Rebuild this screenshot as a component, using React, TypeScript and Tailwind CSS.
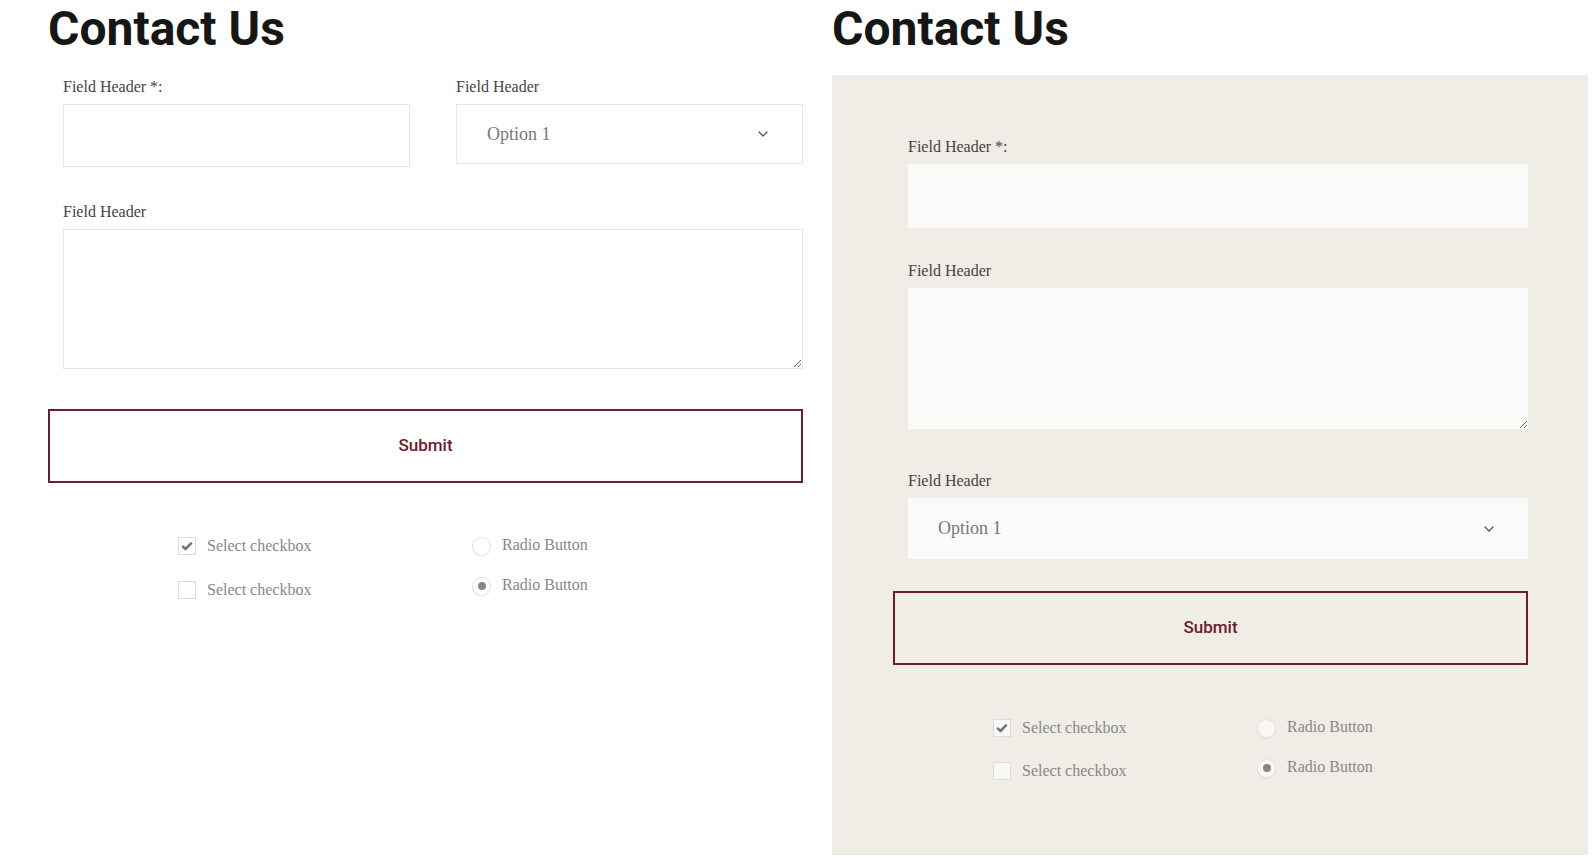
import React from 'react';

const serif = "font-['Liberation_Serif','Times_New_Roman',serif]";
const roboto = "font-['Roboto','Liberation_Sans',sans-serif]";

const Chevron = () => (
  <svg width="10" height="6" viewBox="0 0 10 6" fill="none">
    <path d="M1 1l4 4 4-4" stroke="#555" strokeWidth="1.3" strokeLinecap="round" strokeLinejoin="round" />
  </svg>
);

const Label = ({ text }: { text: string }) => (
  <div className={`${serif} h-[20px] leading-[20px] text-[16px] text-[#444] mb-[7px]`}>{text}</div>
);

const SelectBox = ({ filled, h }: { filled?: boolean; h: string }) => (
  <div
    className={`${h} flex items-center justify-between pl-[30px] pr-[34px] ${
      filled ? 'bg-[#fafaf8]' : 'bg-white border border-[#e6e6e6]'
    }`}
  >
    <span className={`${serif} text-[18px] text-[#777]`}>Option 1</span>
    <Chevron />
  </div>
);

const Checkbox = ({ checked, filled }: { checked?: boolean; filled?: boolean }) => (
  <div className="flex items-center h-[18px]">
    <div
      className={`w-[18px] h-[18px] border border-[#dcdcdc] flex items-center justify-center ${
        filled ? 'bg-[#f9f8f5]' : 'bg-white'
      }`}
    >
      {checked && (
        <svg width="16" height="16" viewBox="0 0 16 16" fill="none">
          <path d="M4 8.6l2.5 2.4L12 5.4" stroke="#777" strokeWidth="2.7" strokeLinecap="round" strokeLinejoin="round" />
        </svg>
      )}
    </div>
    <span className={`${serif} ml-[11px] text-[16px] leading-[18px] text-[#888]`}>Select checkbox</span>
  </div>
);

const Radio = ({ checked, filled }: { checked?: boolean; filled?: boolean }) => (
  <div className="flex items-center h-[18px]">
    <div
      className={`w-[19px] h-[19px] rounded-full border border-[#e2e2e2] shadow-[0_1px_1px_rgba(0,0,0,0.04)] flex items-center justify-center ${
        filled ? 'bg-[#f9f8f5]' : 'bg-white'
      }`}
    >
      {checked && <div className="w-[8px] h-[8px] rounded-full bg-[#858585]" />}
    </div>
    <span className={`${serif} ml-[11px] -mt-[2px] text-[16px] leading-[18px] text-[#888]`}>Radio Button</span>
  </div>
);

const SubmitButton = () => (
  <button
    type="button"
    className={`${roboto} w-full h-[74px] border-2 border-[#6b1f2b] text-[17px] font-medium text-[#6e1c28] bg-transparent`}
  >
    Submit
  </button>
);

const Heading = () => (
  <h1 className={`${roboto} text-[48px] leading-none h-[48px] font-bold text-[#161616]`}>
    Contact Us
  </h1>
);

export default function App() {
  return (
    <div className="w-[1592px] h-[858px] bg-white flex overflow-hidden">
      {/* Plain form */}
      <div className="w-[832px] pl-[48px] pt-[5px] shrink-0">
        <Heading />
        <form className="w-[755px] mt-[24px]">
          <div className="flex gap-[46px] pl-[15px]">
            <div className="w-[347px]">
              <Label text="Field Header *:" />
              <input className="block w-full h-[63px] border border-[#e6e6e6] bg-white outline-none" />
            </div>
            <div className="w-[347px]">
              <Label text="Field Header" />
              <SelectBox h="h-[60px]" />
            </div>
          </div>
          <div className="pl-[15px] mt-[35px]">
            <Label text="Field Header" />
            <textarea className="block w-full h-[140px] border border-[#e6e6e6] bg-white outline-none" />
          </div>
          <div className="mt-[40px]">
            <SubmitButton />
          </div>
          <div className="flex mt-[54px] pl-[130px]">
            <div className="w-[294px] flex flex-col gap-[26px]">
              <Checkbox checked />
              <Checkbox />
            </div>
            <div className="flex flex-col gap-[22px]">
              <Radio />
              <Radio checked />
            </div>
          </div>
        </form>
      </div>

      {/* Form on panel */}
      <div className="flex-1 pt-[5px]">
        <Heading />
        <div className="w-[756px] h-[780px] mt-[22px] bg-[#f0ece6] pl-[61px] pt-[62px]">
          <form className="w-[635px]">
            <div className="pl-[15px]">
              <Label text="Field Header *:" />
              <input className="block w-full h-[64px] bg-[#fafaf8] outline-none" />
            </div>
            <div className="pl-[15px] mt-[33px]">
              <Label text="Field Header" />
              <textarea className="block w-full h-[141px] bg-[#fafaf8] outline-none" />
            </div>
            <div className="pl-[15px] mt-[42px]">
              <Label text="Field Header" />
              <SelectBox filled h="h-[61px]" />
            </div>
            <div className="mt-[32px]">
              <SubmitButton />
            </div>
            <div className="flex mt-[54px] pl-[100px]">
              <div className="w-[264px] flex flex-col gap-[25px]">
                <Checkbox checked filled />
                <Checkbox filled />
              </div>
              <div className="flex flex-col gap-[22px]">
                <Radio filled />
                <Radio checked filled />
              </div>
            </div>
          </form>
        </div>
      </div>
    </div>
  );
}
